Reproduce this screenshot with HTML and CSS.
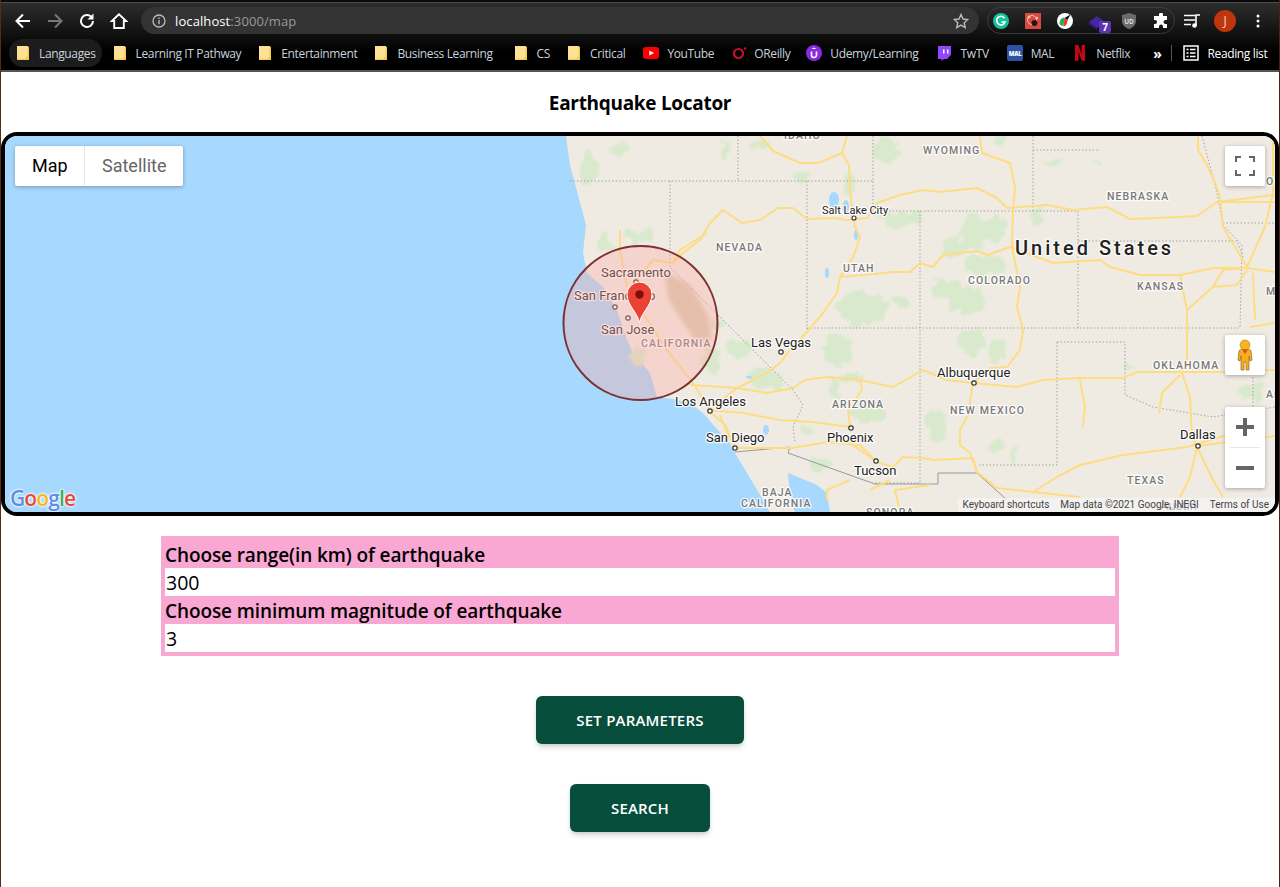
FILE: index.html
```html
<!DOCTYPE html>
<html>
<head>
    <title>Earthquake Locator</title>
    <link rel="stylesheet" href="styles.css">
</head>
<body>
    <svg class="defs" width="0" height="0">
        <symbol id="folder" viewBox="0 0 12 14">
            <path d="M0 0h10.500l1.500 1.500v12.500h-12z" fill="#fde293"/>
            <path d="M10.500 0l1.500 1.500v12.500h-12v-1.200h10.500z" fill="#f7cb4d"/>
            <path d="M9 11h3v3h-3z" fill="#f7cb4d"/>
        </symbol>
    </svg>

    <!-- barra do navegador -->
    <header class="browser">
        <div class="toolbar">
            <button class="nav-btn"><svg width="18" height="18" viewBox="0 0 18 18"><path d="M16 9H3M9 2.500L2.500 9 9 15.500" fill="none" stroke="#fff" stroke-width="2"/></svg></button>
            <button class="nav-btn"><svg width="18" height="18" viewBox="0 0 18 18"><path d="M2 9h13M9 2.500L15.500 9 9 15.500" fill="none" stroke="#777" stroke-width="2"/></svg></button>
            <button class="nav-btn"><svg width="18" height="18" viewBox="0 0 18 18"><path d="M15 9a6 6 0 1 1-1.800-4.300" fill="none" stroke="#fff" stroke-width="2"/><path d="M15.500 1.500v6h-6z" fill="#fff"/></svg></button>
            <button class="nav-btn"><svg width="18" height="18" viewBox="0 0 18 18"><path d="M9 2.200L1.800 9h2.400v7h9.600V9h2.400z" fill="none" stroke="#fff" stroke-width="1.900"/></svg></button>
            <div class="omnibox">
                <svg width="14" height="14" viewBox="0 0 14 14"><circle cx="7" cy="7" r="6" fill="none" stroke="#bbb" stroke-width="1.300"/><path d="M6.300 6h1.400v4.300H6.300zM6.300 3.500h1.400v1.400H6.300z" fill="#bbb"/></svg>
                <span class="url"><b>localhost</b>:3000/map</span>
                <svg class="star" width="16" height="16" viewBox="0 0 16 16"><path d="M8 1.500l2 4.500 4.800.500-3.600 3.200 1 4.800L8 12.100l-4.200 2.400 1-4.800L1.200 6.500 6 6z" fill="none" stroke="#bbb" stroke-width="1.400"/></svg>
            </div>
            <div class="extensions">
                <svg width="16" height="16" viewBox="0 0 16 16"><circle cx="8" cy="8" r="8" fill="#15c39a"/><path d="M11.500 5.200A4.300 4.300 0 1 0 12 9H8.500" fill="none" stroke="#fff" stroke-width="1.600"/></svg>
                <svg width="16" height="16" viewBox="0 0 16 16"><rect width="16" height="16" fill="#d9493f"/><circle cx="7" cy="7" r="4.500" fill="none" stroke="#f3c1b8" stroke-width="1"/><circle cx="9.500" cy="10" r="3" fill="#2a1512"/><circle cx="4" cy="4" r="1.500" fill="#f3c1b8"/><circle cx="12" cy="5" r="1.200" fill="#f3c1b8"/></svg>
                <svg width="16" height="16" viewBox="0 0 16 16"><circle cx="8" cy="8" r="8" fill="#fff"/><path d="M2.500 11c0-5 3-7 5-6L6.500 13c-2 0-3-1-4-2z" fill="#2fae4e"/><path d="M6.500 13.500l1-8.500 3 2c0 3-2 6.500-4 6.500z" fill="#e53935"/><path d="M7.500 5l6-3.500-3 5.500z" fill="#111"/></svg>
                <div class="ext-stack">
                    <svg width="16" height="14" viewBox="0 0 16 14"><path d="M8 0l8 6-8 6-8-6z" fill="#4527a0"/><path d="M0 6l8 6v2L0 8z" fill="#311b92"/></svg>
                    <span class="ext-badge">7</span>
                </div>
                <svg width="16" height="16" viewBox="0 0 16 16"><path d="M8 0l7 2v6c0 4-3 6.500-7 8-4-1.500-7-4-7-8V2z" fill="#6b6b6b"/><text x="8" y="10.500" class="ublock">UD</text></svg>
                <svg width="16" height="16" viewBox="0 0 16 16"><path d="M6 1.500a2 2 0 0 1 4 0V3h4v4h-1.500a2 2 0 0 0 0 4H14v4h-4v-1.500a2 2 0 0 0-4 0V15H1v-4h1a2 2 0 0 0 0-4H1V3h5z" fill="#fff"/></svg>
            </div>
            <button class="nav-btn"><svg width="18" height="16" viewBox="0 0 18 16"><path d="M1 2.500h11M1 7h11M1 11.500h7" stroke="#fff" stroke-width="1.600"/><path d="M13 12.500V2h4" fill="none" stroke="#fff" stroke-width="1.600"/><circle cx="11.500" cy="12.500" r="2.300" fill="#fff"/></svg></button>
            <div class="avatar">J</div>
            <svg class="kebab" width="16" height="16" viewBox="0 0 16 16"><circle cx="8" cy="3" r="1.500" fill="#fff"/><circle cx="8" cy="8" r="1.500" fill="#fff"/><circle cx="8" cy="13" r="1.500" fill="#fff"/></svg>
        </div>
        <nav class="bookmarks">
            <a class="bookmark bookmark-open"><svg class="folder"><use href="#folder"/></svg>Languages</a>
            <a class="bookmark"><svg class="folder"><use href="#folder"/></svg>Learning IT Pathway</a>
            <a class="bookmark"><svg class="folder"><use href="#folder"/></svg>Entertainment</a>
            <a class="bookmark bookmark-wide"><svg class="folder"><use href="#folder"/></svg>Business Learning</a>
            <a class="bookmark"><svg class="folder"><use href="#folder"/></svg>CS</a>
            <a class="bookmark"><svg class="folder"><use href="#folder"/></svg>Critical</a>
            <a class="bookmark"><svg class="favicon" viewBox="0 0 16 12"><rect width="16" height="12" rx="3" fill="#f00"/><path d="M6.300 3.500L11 6l-4.700 2.500z" fill="#fff"/></svg>YouTube</a>
            <a class="bookmark bookmark-tight"><svg class="favicon" viewBox="0 0 16 16"><circle cx="6.500" cy="8.500" r="4.500" fill="none" stroke="#c8102e" stroke-width="2.200"/><circle cx="13" cy="3.500" r="1.200" fill="#c8102e"/></svg>OReilly</a>
            <a class="bookmark"><svg class="favicon" viewBox="0 0 16 16"><circle cx="8" cy="8" r="8" fill="#8a2be2"/><path d="M5.500 6.500V10a2.500 2.500 0 0 0 5 0V6.500" fill="none" stroke="#fff" stroke-width="1.600"/><path d="M8 2.500l2.500 1.500h-5z" fill="#fff"/></svg>Udemy/Learning</a>
            <a class="bookmark"><svg class="favicon" viewBox="0 0 16 16"><path d="M2 1h13v9l-4 4H8l-2.500 2v-2H2z" fill="#9146ff"/><path d="M7 4.500h1.500v4H7zM11 4.500h1.500v4H11z" fill="#fff"/></svg>TwTV</a>
            <a class="bookmark"><svg class="favicon" viewBox="0 0 16 16"><rect width="16" height="16" rx="2" fill="#2e51a2"/><text x="8" y="10.500" class="mal">MAL</text></svg>MAL</a>
            <a class="bookmark"><svg class="favicon" viewBox="0 0 16 16"><path d="M3 0h3.500l3 9V0H13v16l-3.500-.5-3-9V15.500L3 16z" fill="#c20812"/></svg>Netflix</a>
            <span class="more">&raquo;</span>
            <span class="bar-divider"></span>
            <a class="bookmark reading"><svg class="favicon" viewBox="0 0 16 16"><rect x="1" y="1" width="14" height="14" fill="none" stroke="#fff" stroke-width="1.500"/><path d="M3.500 4.500h2M7 4.500h5.500M3.500 8h2M7 8h5.500M3.500 11.500h2M7 11.500h5.500" stroke="#fff" stroke-width="1.500"/></svg>Reading list</a>
        </nav>
    </header>

    <main class="page">
        <h1 class="title">Earthquake Locator</h1>

        <section class="map">
            <svg class="map-canvas" viewBox="5 136 1270 376" width="1270" height="376">
                <defs>
                    <!-- deixa as manchas de vegetacao irregulares -->
                    <filter id="organic" x="-5%" y="-5%" width="110%" height="110%">
                        <feTurbulence type="fractalNoise" baseFrequency="0.09" numOctaves="3" seed="4"/>
                        <feDisplacementMap in="SourceGraphic" scale="16" xChannelSelector="R" yChannelSelector="G"/>
                        <feGaussianBlur stdDeviation="0.800"/>
                    </filter>
                    <filter id="soft"><feGaussianBlur stdDeviation="2"/></filter>
                </defs>
                <rect x="5" y="136" width="1270" height="376" fill="#a7d8fe"/>
                <!-- terra -->
                <path class="land" d="M566 136L570 165 578 195 586 225 583 253 587 273 603 287 617 310 627 340 633 353 650 373 657 397 673 399 690 403 703 413 716 428 730 443 735 453 747 473 763 500 770 512H1275V136z"/>
                <path class="water" d="M788 473L817 485 827 493 830 512H795L790 495z"/>

                <g class="greens" filter="url(#organic)">
                    <ellipse cx="802" cy="175" rx="8" ry="6"/><ellipse cx="760" cy="145" rx="12" ry="6"/><ellipse cx="887" cy="150" rx="14" ry="13"/>
                    <ellipse cx="900" cy="218" rx="24" ry="6"/><ellipse cx="862" cy="308" rx="24" ry="16"/><ellipse cx="973" cy="233" rx="14" ry="18"/>
                    <ellipse cx="953" cy="248" rx="12" ry="10"/><ellipse cx="995" cy="228" rx="12" ry="12"/><ellipse cx="985" cy="265" rx="22" ry="10"/>
                    <ellipse cx="945" cy="288" rx="14" ry="10"/><ellipse cx="968" cy="300" rx="18" ry="14"/><ellipse cx="900" cy="303" rx="10" ry="7"/>
                    <ellipse cx="1037" cy="217" rx="7" ry="6"/><ellipse cx="1003" cy="140" rx="8" ry="6"/><ellipse cx="1053" cy="162" rx="7" ry="4"/>
                    <ellipse cx="850" cy="182" rx="6" ry="10"/><ellipse cx="717" cy="325" rx="10" ry="6"/><ellipse cx="837" cy="350" rx="14" ry="16"/>
                    <ellipse cx="852" cy="378" rx="12" ry="8"/><ellipse cx="775" cy="382" rx="10" ry="8"/><ellipse cx="835" cy="388" rx="6" ry="10"/>
                    <ellipse cx="867" cy="412" rx="16" ry="12"/><ellipse cx="937" cy="425" rx="10" ry="16"/><ellipse cx="973" cy="342" rx="12" ry="14"/>
                    <ellipse cx="997" cy="350" rx="8" ry="10"/><ellipse cx="807" cy="432" rx="5" ry="6"/><ellipse cx="997" cy="444" rx="6" ry="5"/>
                    <ellipse cx="820" cy="464" rx="12" ry="6"/><ellipse cx="1013" cy="457" rx="3" ry="7"/><ellipse cx="1100" cy="160" rx="5" ry="3"/>
                    <ellipse cx="1130" cy="367" rx="4" ry="3"/><ellipse cx="1250" cy="392" rx="12" ry="8"/><ellipse cx="637" cy="237" rx="14" ry="7"/>
                    <ellipse cx="603" cy="243" rx="8" ry="10"/><ellipse cx="740" cy="347" rx="12" ry="10"/><ellipse cx="760" cy="377" rx="12" ry="10"/>
                    <ellipse cx="712" cy="362" rx="8" ry="14"/><ellipse cx="637" cy="357" rx="8" ry="7"/><ellipse cx="590" cy="170" rx="8" ry="18"/>
                    <ellipse cx="620" cy="150" rx="10" ry="6"/><ellipse cx="725" cy="150" rx="5" ry="8"/>
                </g>
                <path class="hills" filter="url(#soft)" d="M665 272L690 285 708 315 712 340 695 340 680 318 668 298z"/>
                <g class="lakes">
                    <ellipse cx="834" cy="200" rx="5" ry="8"/><ellipse cx="846" cy="207" rx="3" ry="7"/><ellipse cx="856" cy="235" rx="2" ry="5"/>
                    <ellipse cx="827" cy="273" rx="2" ry="5"/><ellipse cx="749" cy="377" rx="3" ry="1.500"/><ellipse cx="766" cy="430" rx="3" ry="5"/>
                </g>

                <!-- fronteiras -->
                <g class="borders">
                    <path d="M570 181H873M738 136V181M873 136V211H1078V328M920 211V483M807 181V328H1240M670 181V267L793 390 803 405 793 427 795 443"/>
                    <path d="M1033 136V211M1033 150H1100M807 328V330M1057 342V465H977M1057 342H1125V395L1153 407 1213 417 1275 407"/>
                    <path d="M1078 241H1237L1243 257M1202 136L1217 193 1223 225 1242 245 1240 328M1223 223H1275M1253 377V413M919 483H875"/>
                </g>
                <path class="border-intl" d="M735 452L790 447 788 453 875 484H938V473H977L1007 500"/>

                <!-- estradas -->
                <g class="roads">
                    <path d="M634 283L653 260 673 263 683 253 700 240 710 223 723 210 742 223 760 220 778 208 793 208 807 219 833 218 847 220 867 218 877 203 900 195 923 190 940 192 977 188 997 198 1007 208 1047 205 1073 210 1107 207 1130 219 1157 218 1197 216 1217 202 1275 195"/>
                    <path d="M760 136L773 151 800 163 818 163 842 153 847 136M842 153L849 165 850 190 853 217 855 227 860 237 853 257 840 277 837 293 823 313 807 332 790 350 780 363 767 373 737 388 713 407"/>
                    <path d="M840 277L863 275 893 272 910 272 920 263 933 267 943 255 977 251 987 255 1010 247 1037 257 1053 263 1100 260 1110 267 1140 275 1180 275 1213 268 1247 268 1275 272"/>
                    <path d="M980 136L982 153 1010 163 1015 187 1013 210 1012 247 1020 287 1017 307 1023 330 1020 350 1007 367 990 368 973 383 968 415 960 430 960 445 970 453 977 472"/>
                    <path d="M737 388L767 393 793 388 805 380 827 377 860 380 893 387 923 370 947 380 973 383 1017 387 1043 380 1080 378 1123 378 1137 372 1180 372 1223 372 1275 370"/>
                    <path d="M708 410L743 413 780 420 813 422 850 427 848 410 862 390 860 380M735 448L793 448 827 442 860 445 877 462 893 467 903 457 923 458 933 460 973 458 977 472 997 488 1033 492 1057 477 1080 465 1123 455 1187 447 1227 435M1033 492L1080 497M850 443L877 462"/>
                    <path d="M1187 310V363L1180 372M1180 275L1187 310 1213 287 1223 270 1247 268M1212 287L1237 285 1247 270M1247 267L1223 227 1220 197 1215 183 1208 167 1198 150 1198 136M1247 267L1265 227 1273 193V136M1217 202H1275"/>
                    <path d="M1182 373L1190 397 1192 437 1197 447 1213 480 1223 497M1180 375L1162 393 1159 413M1197 447L1190 477 1180 497M1253 273L1255 320M1250 327L1275 323M1080 380L1085 407 1083 427M1197 446L1275 436"/>
                    <path d="M633 283L643 313 667 350 693 383 710 410M620 230V250L627 287M707 233L680 250 673 263M708 410L725 425 735 448M720 415L730 440M827 500V490L850 480M870 490L890 480M900 512L895 490 930 485M690 385L737 388"/>
                </g>

                <!-- nomes -->
                <text class="state" x="784" y="139">IDAHO</text>
                <text class="state" x="923" y="154">WYOMING</text>
                <text class="state" x="1107" y="200">NEBRASKA</text>
                <text class="state" x="1262" y="185">IOWA</text>
                <text class="state" x="716" y="251">NEVADA</text>
                <text class="state" x="843" y="272">UTAH</text>
                <text class="state" x="968" y="284">COLORADO</text>
                <text class="state" x="1137" y="290">KANSAS</text>
                <text class="state" x="1266" y="295">MISSOURI</text>
                <text class="state" x="1153" y="369">OKLAHOMA</text>
                <text class="state" x="1266" y="398">ARKANSAS</text>
                <text class="state" x="832" y="408">ARIZONA</text>
                <text class="state" x="950" y="414">NEW MEXICO</text>
                <text class="state" x="1127" y="484">TEXAS</text>
                <text class="state" x="762" y="496">BAJA</text>
                <text class="state" x="741" y="507">CALIFORNIA</text>
                <text class="state" x="866" y="516">SONORA</text>
                <text class="state" x="641" y="347">CALIFORNIA</text>
                <text class="country" x="1015" y="255">United States</text>
                <text class="city" x="601" y="277">Sacramento</text>
                <text class="city" x="574" y="300">San Francisco</text>
                <text class="city" x="601" y="334">San Jose</text>
                <text class="city small" x="822" y="214">Salt Lake City</text>
                <text class="city" x="751" y="347">Las Vegas</text>
                <text class="city" x="675" y="406">Los Angeles</text>
                <text class="city" x="706" y="442">San Diego</text>
                <text class="city" x="827" y="442">Phoenix</text>
                <text class="city" x="937" y="377">Albuquerque</text>
                <text class="city" x="854" y="475">Tucson</text>
                <text class="city" x="1180" y="439">Dallas</text>
                <text class="city" x="1160" y="510">Austin</text>
                <g class="dots">
                    <circle cx="854" cy="218" r="2"/><circle cx="781" cy="352" r="2.200"/><circle cx="710" cy="411" r="2.200"/><circle cx="735" cy="448" r="2.200"/>
                    <circle cx="851" cy="428" r="2.200"/><circle cx="876" cy="461" r="2.200"/><circle cx="974" cy="383" r="2.200"/><circle cx="1198" cy="446" r="2.200"/>
                    <circle cx="615" cy="307" r="2.200"/><circle cx="628" cy="318" r="2.200"/><circle cx="636" cy="282" r="2.200"/>
                </g>

                <!-- raio de busca e marcador -->
                <circle class="range" cx="640.500" cy="323" r="77"/>
                <path class="pin" d="M639.500 323C638 313 627 305 627 294.500A12.500 12.500 0 0 1 652 294.500C652 305 641 313 639.500 323z"/>
                <circle cx="639.500" cy="294.500" r="4.200" fill="#7a0f0c"/>
            </svg>

            <div class="map-type">
                <span class="map-type-on">Map</span>
                <span class="map-type-off">Satellite</span>
            </div>
            <button class="map-btn map-fullscreen"><svg width="20" height="20" viewBox="-1 -1 20 20"><path d="M0 5V0h5M13 0h5v5M18 13v5h-5M5 18H0v-5" fill="none" stroke="#666" stroke-width="2"/></svg></button>
            <button class="map-btn map-pegman"><svg width="18" height="32" viewBox="0 0 18 32"><path d="M3 12c0-1 2-2 4-2h4c2 0 4 1 4 2l1 9-2 1-1-5v14h-3v-8H8v8H5V17l-1 5-2-1z" fill="#f9ad1c" stroke="#8a6a2e" stroke-width=".7"/><circle cx="9" cy="6" r="5" fill="#f9b31c" stroke="#a8802e" stroke-width=".6"/><path d="M6 10.500h6L9 15z" fill="#c9561a"/></svg></button>
            <div class="map-zoom">
                <button class="map-zoom-btn"><svg width="18" height="18" viewBox="0 0 18 18"><path d="M0 7h7V0h4v7h7v4h-7v7H7v-7H0z" fill="#666"/></svg></button>
                <span class="map-zoom-line"></span>
                <button class="map-zoom-btn"><svg width="18" height="4" viewBox="0 0 18 4"><path d="M0 0h18v4H0z" fill="#666"/></svg></button>
            </div>
            <div class="google-logo"><span class="g-blue">G</span><span class="g-red">o</span><span class="g-yellow">o</span><span class="g-blue">g</span><span class="g-green">l</span><span class="g-red">e</span></div>
            <div class="attribution">
                <span>Keyboard shortcuts</span>
                <span>Map data &copy;2021 Google, INEGI</span>
                <span>Terms of Use</span>
            </div>
        </section>

        <form class="params">
            <label class="params-label" for="range">Choose range(in km) of earthquake</label>
            <input class="params-input" id="range" type="text" value="300">
            <label class="params-label" for="magnitude">Choose minimum magnitude of earthquake</label>
            <input class="params-input" id="magnitude" type="text" value="3">
        </form>

        <button class="action action-set">Set parameters</button>
        <button class="action action-search">Search</button>
    </main>
</body>
</html>
```

FILE: styles.css
```css
/* base */
* {
    box-sizing: border-box;
}

body {
    margin: 0;
    height: 887px;
    overflow: hidden;
    background: #fff;
    border-left: 1px solid #5a2a14;
    border-right: 1px solid #4a2412;
    font-family: "Open Sans", "Noto Sans", sans-serif;
}

button {
    border: none;
    background: none;
    padding: 0;
    font-family: inherit;
}

.defs {
    display: block;
}

/* navegador */
.browser {
    height: 72px;
    padding-top: 3px;
    background: linear-gradient(#2e2e2e, #000 50px);
    border-top: 2px solid #0a0a0a;
    border-bottom: 2px solid #555;
    box-shadow: inset 0 1px 0 #4a4a4a;
}

.toolbar {
    display: flex;
    align-items: center;
    height: 31px;
    padding: 0 13px 0 6px;
}

.nav-btn {
    display: flex;
    align-items: center;
    justify-content: center;
    width: 32px;
    height: 28px;
}

.omnibox {
    flex: 1;
    display: flex;
    align-items: center;
    height: 27px;
    margin: 0 8px 0 6px;
    padding: 0 10px 0 11px;
    background: #333;
    border-radius: 14px;
}

.url {
    flex: 1;
    margin-left: 9px;
    font-size: 13px;
    letter-spacing: 0.1px;
    color: #9a9a9a;
}

.url b {
    font-weight: 400;
    color: #fff;
}

.extensions {
    display: flex;
    align-items: center;
    gap: 16px;
    height: 27px;
    padding: 0 5px;
    border: 1px solid #3c3c3c;
    border-radius: 14px;
    margin-right: 1px;
}

.ext-stack {
    position: relative;
    width: 16px;
    height: 16px;
}

.ext-badge {
    position: absolute;
    left: 10px;
    top: 8px;
    width: 12px;
    height: 12px;
    background: #5e35b1;
    border-radius: 2px;
    color: #fff;
    font-size: 10px;
    font-weight: 700;
    line-height: 12px;
    text-align: center;
}

.ublock {
    font-size: 6.500px;
    font-weight: 700;
    fill: #ddd;
    text-anchor: middle;
}

.mal {
    font-size: 6px;
    font-weight: 800;
    fill: #fff;
    text-anchor: middle;
}

.avatar {
    width: 22px;
    height: 22px;
    margin-left: 6px;
    border-radius: 50%;
    background: #bf360c;
    color: #f5d5c8;
    font-size: 12px;
    line-height: 22px;
    text-align: center;
}

.kebab {
    margin-left: 14px;
}

.bookmarks {
    display: flex;
    align-items: center;
    height: 34px;
    padding-left: 8px;
    color: #c9d3dc;
    font-size: 12px;
    letter-spacing: -0.36px;
}

.bookmark {
    display: flex;
    align-items: center;
    height: 28px;
    padding: 0 6px 0 8px;
    margin-right: 4px;
    white-space: nowrap;
}

.bookmark-open {
    background: #1c1c1c;
    border-radius: 14px;
}

.bookmark-wide {
    margin-right: 8px;
}

.bookmark-tight {
    margin-right: 2px;
}

.bookmark-tight .favicon {
    margin-right: 6px;
}

.folder {
    width: 12px;
    height: 14px;
    margin-right: 10px;
}

.favicon {
    width: 16px;
    height: 16px;
    margin-right: 8px;
}

.more {
    margin-left: 13px;
    color: #fff;
    font-size: 14px;
    font-weight: 700;
}

.bar-divider {
    width: 1px;
    height: 16px;
    margin: 0 3px 0 10px;
    background: #555;
}

.reading {
    color: #fff;
    margin-right: 0;
}

/* pagina */
.page {
    display: flex;
    flex-direction: column;
    align-items: center;
}

.title {
    margin: 0;
    height: 60px;
    font-size: 19px;
    font-weight: 700;
    line-height: 62px;
    letter-spacing: -0.3px;
    color: #000;
}

/* mapa */
.map {
    position: relative;
    width: 1278px;
    height: 384px;
    border: 4px solid #000;
    border-radius: 16px;
    overflow: hidden;
}

.map-canvas {
    display: block;
    font-family: Roboto, sans-serif;
}

.land {
    fill: #efebe3;
}

.water,
.lakes {
    fill: #a7d8fe;
}

.greens {
    fill: #d8e9cc;
}

.hills {
    fill: #d8cbb0;
}

.borders {
    fill: none;
    stroke: #a3a3a3;
    stroke-width: 1;
    stroke-dasharray: 1.500 2;
}

.border-intl {
    fill: none;
    stroke: #999;
    stroke-width: 1;
}

.roads {
    fill: none;
    stroke: #fedc82;
    stroke-width: 2;
    stroke-linejoin: round;
}

.state,
.city,
.country {
    paint-order: stroke;
    stroke: #fff;
    stroke-opacity: 0.85;
    stroke-width: 2.500px;
    stroke-linejoin: round;
}

.state {
    font-size: 10.500px;
    font-weight: 500;
    letter-spacing: 1.100px;
    fill: #787878;
}

.city {
    font-size: 13px;
    fill: #222;
}

.city.small {
    font-size: 11px;
}

.country {
    font-size: 20px;
    font-weight: 500;
    letter-spacing: 3px;
    fill: #222;
}

.dots {
    fill: #fff;
    stroke: #333;
    stroke-width: 1.200;
}

.range {
    fill: rgb(255, 170, 160);
    fill-opacity: 0.35;
    stroke: #7c3232;
    stroke-width: 2;
}

.pin {
    fill: #ea4335;
    stroke: #fff;
    stroke-width: 1;
}

.map-type {
    position: absolute;
    left: 10px;
    top: 10px;
    display: flex;
    height: 40px;
    background: #fff;
    border-radius: 2px;
    box-shadow: 0 1px 4px rgba(0, 0, 0, 0.3);
    font-family: Roboto, sans-serif;
    font-size: 18px;
    line-height: 40px;
}

.map-type-on {
    width: 70px;
    padding-left: 17px;
    color: #000;
    border-right: 1px solid #e6e6e6;
}

.map-type-off {
    width: 98px;
    padding-left: 17px;
    color: #666;
}

.map-btn {
    position: absolute;
    left: 1220px;
    display: flex;
    align-items: center;
    justify-content: center;
    width: 40px;
    height: 40px;
    background: #fff;
    border-radius: 2px;
    box-shadow: 0 1px 4px rgba(0, 0, 0, 0.3);
}

.map-fullscreen {
    top: 10px;
}

.map-pegman {
    top: 199px;
}

.map-zoom {
    position: absolute;
    left: 1220px;
    top: 271px;
    width: 40px;
    height: 81px;
    background: #fff;
    border-radius: 2px;
    box-shadow: 0 1px 4px rgba(0, 0, 0, 0.3);
}

.map-zoom-btn {
    display: flex;
    align-items: center;
    justify-content: center;
    width: 40px;
    height: 40px;
}

.map-zoom-line {
    display: block;
    height: 1px;
    margin: 0 5px;
    background: #e6e6e6;
}

.google-logo {
    position: absolute;
    left: 5px;
    bottom: 2px;
    font-family: "Open Sans", sans-serif;
    font-size: 21px;
    font-weight: 600;
    line-height: 24px;
    letter-spacing: -0.9px;
    text-shadow: 0 0 2px #fff, 0 0 2px #fff, 0 0 3px #fff;
}

.g-blue {
    color: #5a8ee8;
}

.g-red {
    color: #e8483a;
}

.g-yellow {
    color: #f5b90f;
}

.g-green {
    color: #3fae56;
}

.attribution {
    position: absolute;
    right: 0;
    bottom: 0;
    display: flex;
    gap: 11px;
    height: 14px;
    padding: 0 6px 0 5px;
    background: rgba(245, 245, 245, 0.7);
    font-family: Roboto, sans-serif;
    font-size: 10px;
    line-height: 14px;
    color: #444;
}

/* formulario */
.params {
    display: flex;
    flex-direction: column;
    width: 958px;
    margin-top: 20px;
    padding: 4px;
    background: #f9a8d4;
}

.params-label {
    height: 28px;
    padding-top: 1px;
    font-size: 19px;
    font-weight: 600;
    line-height: 28px;
    letter-spacing: -0.1px;
    color: #000;
}

.params-input {
    height: 28px;
    padding: 0 1px;
    border: none;
    background: #fff;
    font-family: inherit;
    font-size: 19.500px;
    color: #000;
}

/* botoes */
.action {
    height: 48px;
    background: #064e3b;
    border-radius: 6px;
    box-shadow: 0 4px 6px -1px rgba(0, 0, 0, 0.15), 0 2px 4px -1px rgba(0, 0, 0, 0.1);
    color: #fff;
    font-size: 15px;
    font-weight: 600;
    letter-spacing: 0.2px;
    text-transform: uppercase;
}

.action-set {
    width: 208px;
    margin-top: 40px;
}

.action-search {
    width: 140px;
    margin-top: 40px;
}
```
